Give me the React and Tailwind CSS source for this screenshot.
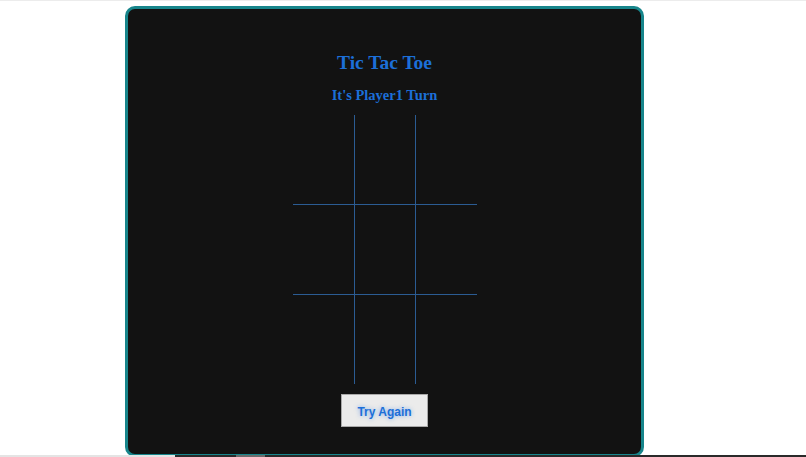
export default function App() {
  const cells = [0, 1, 2, 3, 4, 5, 6, 7, 8];
  return (
    <div className="relative h-[457px] w-[806px] overflow-hidden border-t border-[#ececec] bg-white">
      <div className="ml-[125px] mt-[5px] flex h-[451px] w-[519px] flex-col items-center rounded-[10px] border-[3px] border-[#17858b] bg-[#121212] pt-[42px]">
        <h1 className="h-[24px] text-[19.5px] font-bold leading-[24px] text-[#1c6fd8] [font-family:'Liberation_Serif',serif]">
          Tic Tac Toe
        </h1>
        <h2 className="mt-[10px] h-[20px] text-[14.5px] font-bold leading-[20px] text-[#1c6fd8] [font-family:'Liberation_Serif',serif]">
          It's Player1 Turn
        </h2>
        <div className="mt-[10px] ml-[1px] grid grid-cols-[62px_61px_61px] grid-rows-[90px_90px_89px]">
          {cells.map((i) => (
            <div
              key={i}
              className={
                "border-0 border-[#2b5c93] " +
                (i % 3 !== 2 ? "border-r " : "") +
                (i < 6 ? "border-b" : "")
              }
            />
          ))}
        </div>
        <button className="mt-[10px] h-[33px] w-[87px] border border-[#a9a9a9] bg-[#ebebeb] pt-[2px] text-[12px] font-bold text-[#1c6fd8] [font-family:'Liberation_Sans',Arial,sans-serif] [text-shadow:0_0_4px_rgba(40,120,230,0.55)]">
          Try Again
        </button>
      </div>
      {/* horizontal scrollbar strip along the bottom edge */}
      <div className="absolute bottom-0 left-0 flex h-[2px] w-full">
        <div className="w-[175px] bg-[#e4e4e4]" />
        <div className="w-[61px] bg-[#2a2a2a]" />
        <div className="w-[29px] bg-[#6b6b6b]" />
        <div className="flex-1 bg-[#2a2a2a]" />
      </div>
    </div>
  );
}
